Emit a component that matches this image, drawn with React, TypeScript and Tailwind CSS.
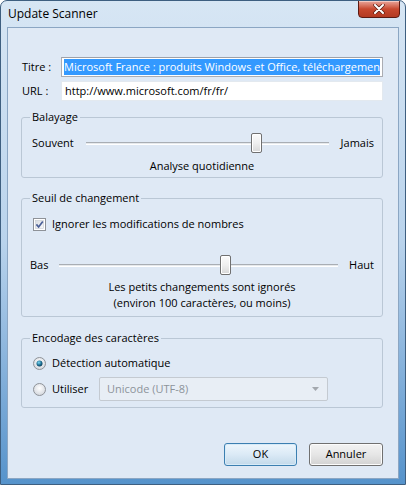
import React from "react";

const font = { fontFamily: '"Open Sans", "Noto Sans", sans-serif' };

function Slider({ left, pos, right, trackMx }: { left: string; pos: string; right: string; trackMx: string }) {
  return (
    <div className="flex items-center h-[20px]">
      <span className="leading-[16px]">{left}</span>
      <div className={`relative flex-1 h-[20px] ${trackMx}`}>
        <div className="absolute left-0 right-0 top-[9px] h-[3px] border-t border-[#a9aeb4] bg-[#e6e9ec] border-b border-b-white" />
        <div
          className={`absolute top-0 ${pos} w-[11px] h-[20px] rounded-[2px] border border-[#707070] bg-gradient-to-b from-[#fbfbfb] via-[#efefef] to-[#d8d8d8] shadow-[inset_0_0_0_1px_#ffffff]`}
        />
      </div>
      <span className="leading-[16px]">{right}</span>
    </div>
  );
}

function Group({ title, className, children }: { title: string; className: string; children: React.ReactNode }) {
  return (
    <fieldset className={`border border-[#bac7d5] rounded-[3px] px-[8px] ${className}`}>
      <legend className="px-[2px] leading-[16px]">{title}</legend>
      {children}
    </fieldset>
  );
}

function Radio({ checked }: { checked?: boolean }) {
  return (
    <svg width="13" height="13" viewBox="0 0 13 13" className="shrink-0">
      <defs>
        <radialGradient id={checked ? "rg1" : "rg0"} cx="50%" cy="40%" r="60%">
          <stop offset="0%" stopColor="#ffffff" />
          <stop offset="100%" stopColor="#d2d6dc" />
        </radialGradient>
        <radialGradient id="dot" cx="40%" cy="35%" r="70%">
          <stop offset="0%" stopColor="#7fdcf7" />
          <stop offset="60%" stopColor="#1c6b8e" />
          <stop offset="100%" stopColor="#0d3c58" />
        </radialGradient>
      </defs>
      <circle cx="6.5" cy="6.5" r="6" fill={checked ? "url(#rg1)" : "url(#rg0)"} stroke="#8e9298" />
      {checked && <circle cx="6.5" cy="6.5" r="3" fill="url(#dot)" />}
    </svg>
  );
}

function Checkbox() {
  return (
    <svg width="13" height="13" viewBox="0 0 13 13" className="shrink-0">
      <defs>
        <linearGradient id="cb" x1="0" y1="0" x2="1" y2="1">
          <stop offset="0%" stopColor="#d9dde2" />
          <stop offset="100%" stopColor="#f7f8f9" />
        </linearGradient>
      </defs>
      <rect x="0.5" y="0.5" width="12" height="12" fill="#ffffff" stroke="#8e9298" />
      <rect x="2.5" y="2.5" width="8" height="8" fill="url(#cb)" stroke="#c5cad0" strokeWidth="0.6" />
      <path d="M3.4 6.4 L5.6 9 L9.8 3.4" fill="none" stroke="#4a5f97" strokeWidth="1.7" />
    </svg>
  );
}

export default function App() {
  return (
    <div
      className="relative w-[406px] h-[485px] overflow-hidden rounded-t-[7px] border border-[#3e5f80] bg-gradient-to-b from-[#d7e6f4] via-[#b9d3ec] to-[#5693cb] text-[11px] text-black"
      style={font}
    >
      <div className="h-[26px] flex items-center pl-[7px] text-[12px]">Update Scanner</div>
      <div className="absolute top-[-1px] right-[5px] w-[42px] h-[18px] rounded-b-[4px] border border-[#5c1a12] bg-gradient-to-b from-[#e9a59b] via-[#c8482f] to-[#b33a23] flex items-center justify-center shadow-[inset_0_1px_0_#f4c8c0]">
        <svg width="12" height="10" viewBox="0 0 12 10">
          <path d="M2 1 L10 9 M10 1 L2 9" stroke="#5a1c14" strokeWidth="3.4" strokeLinecap="round" />
          <path d="M2 1 L10 9 M10 1 L2 9" stroke="#ffffff" strokeWidth="2" strokeLinecap="round" />
        </svg>
      </div>

      <div className="mx-[6px] h-[452px] border border-[#8ba6c3] bg-[#dfe9f5] flex flex-col pl-[13px] pr-[15px]">
        <div className="mt-[29px] flex items-center h-[20px]">
          <span className="w-[40px] pl-[1px]">Titre :</span>
          <div className="flex-1 min-w-0 h-[20px] border border-[#abadb3] border-t-[#9ea1a8] bg-white px-[2px] py-[1px] overflow-hidden">
            <div className="bg-[#3399ff] text-white whitespace-nowrap overflow-hidden leading-[16px]">
              Microsoft France : produits Windows et Office, téléchargements
            </div>
          </div>
        </div>
        <div className="mt-[4px] flex items-center h-[20px]">
          <span className="w-[40px] pl-[1px]">URL :</span>
          <div className="flex-1 h-[20px] border border-[#e3e9ef] bg-white px-[3px] leading-[18px] whitespace-nowrap overflow-hidden">
            http://www.microsoft.com/fr/fr/
          </div>
        </div>

        <Group title="Balayage" className="mt-[8px] pt-[8px] pb-[3px]">
          <div className="pl-[2px]">
            <Slider left="Souvent" pos="left-[68%]" right="Jamais" trackMx="mx-[12px]" />
          </div>
          <div className="mt-[5px] text-center leading-[16px]">Analyse quotidienne</div>
        </Group>

        <Group title="Seuil de changement" className="mt-[12px] pt-[10px] pb-[5px]">
          <div className="flex items-center gap-[6px] h-[16px] pl-[3px]">
            <Checkbox />
            <span>Ignorer les modifications de nombres</span>
          </div>
          <div className="mt-[23px]">
            <Slider left="Bas" pos="left-[57.5%]" right="Haut" trackMx="mx-[11px]" />
          </div>
          <div className="mt-[4px] text-center leading-[16px]">
            Les petits changements sont ignorés
            <br />
            (environ 100 caractères, ou moins)
          </div>
        </Group>

        <Group title="Encodage des caractères" className="mt-[13px] pt-[9px] pb-[6px]">
          <div className="pl-[3px] pr-[46px]">
            <div className="flex items-center gap-[6px] h-[16px]">
              <Radio checked />
              <span>Détection automatique</span>
            </div>
            <div className="mt-[6px] flex items-center h-[24px]">
              <Radio />
              <span className="ml-[6px] w-[47px]">Utiliser</span>
              <div className="flex-1 h-[24px] rounded-[2px] border border-[#c4cad1] bg-[#e8eef5] flex items-center pl-[7px] pr-[8px] text-[#8d939a]">
                <span className="flex-1">Unicode (UTF-8)</span>
                <svg width="7" height="4" viewBox="0 0 7 4">
                  <path d="M0 0 L7 0 L3.5 4 Z" fill="#a3a8ae" />
                </svg>
              </div>
            </div>
          </div>
        </Group>

        <div className="mt-auto mb-[12px] flex justify-end gap-[12px]">
          <button className="w-[73px] h-[23px] rounded-[3px] border border-[#3c7fb1] bg-gradient-to-b from-[#eef6fc] via-[#dbeaf6] to-[#c3d9ea] shadow-[inset_0_0_0_1px_#d7ebf8]">
            OK
          </button>
          <button className="w-[74px] h-[23px] rounded-[3px] border border-[#707070] bg-gradient-to-b from-[#f3f3f3] via-[#e6e6e6] to-[#d2d2d2] shadow-[inset_0_0_0_1px_#fcfcfc]">
            Annuler
          </button>
        </div>
      </div>
    </div>
  );
}
